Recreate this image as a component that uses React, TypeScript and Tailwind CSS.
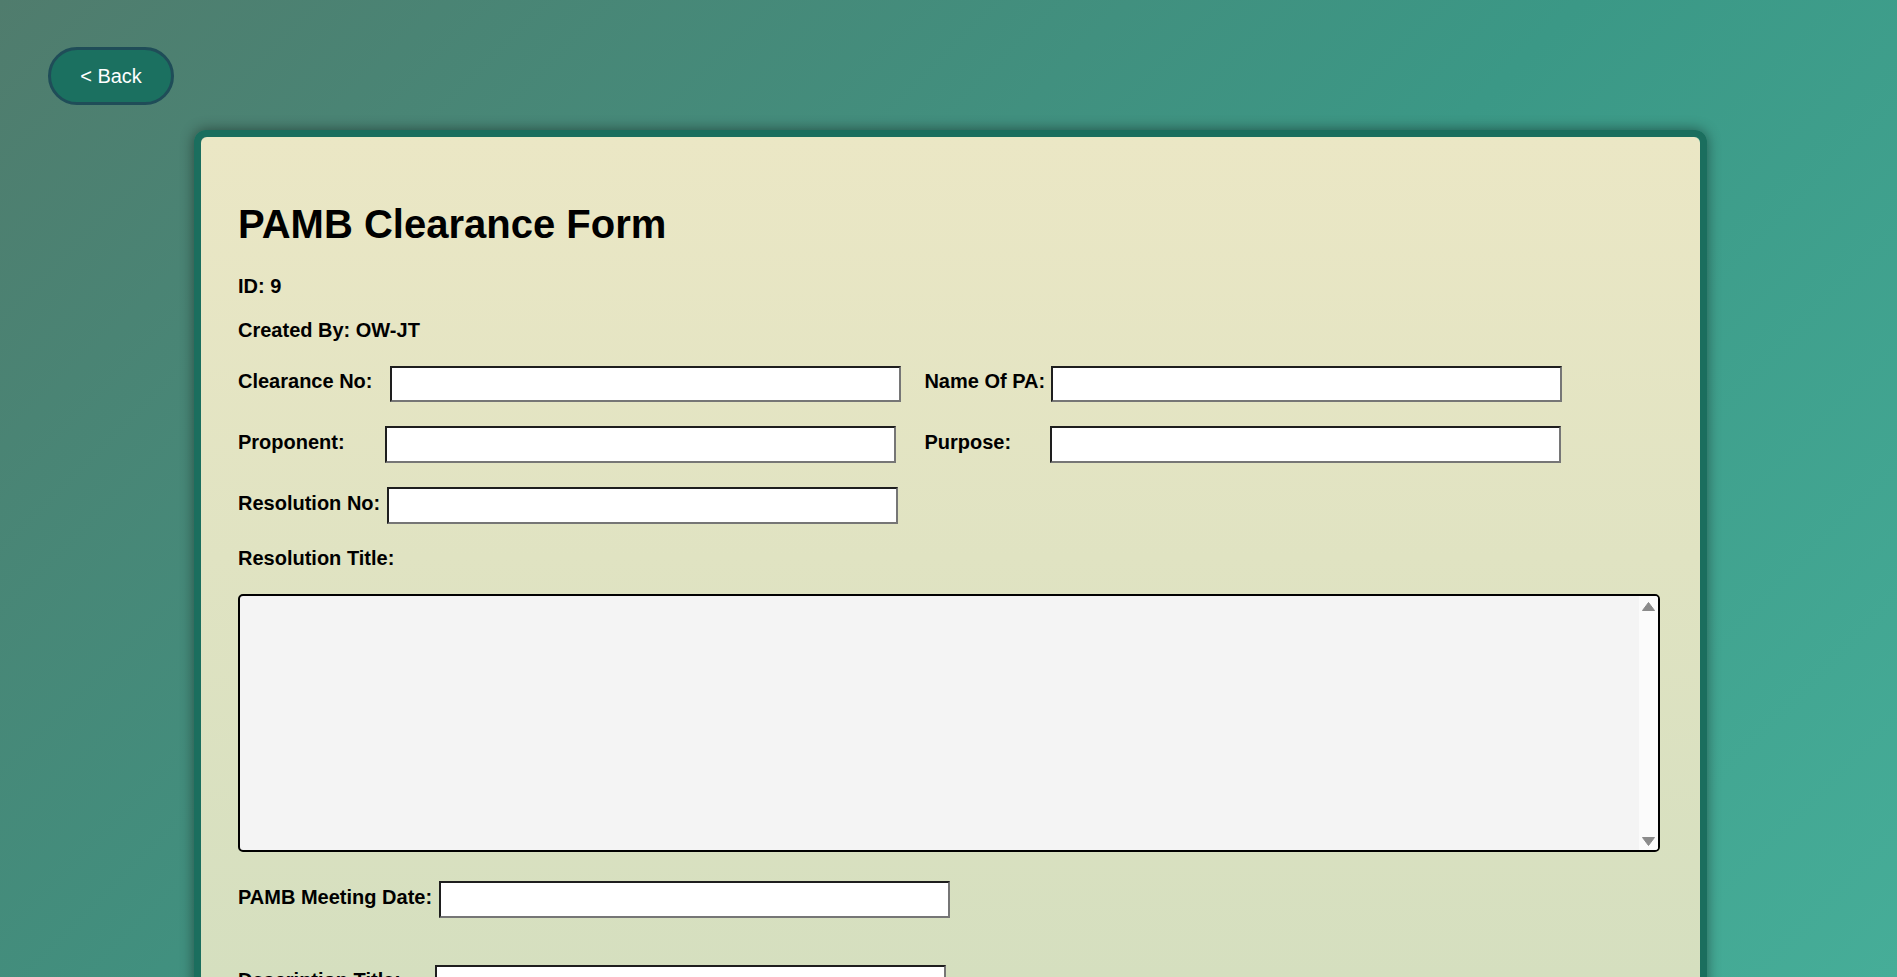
import React from 'react';

type FieldProps = {
  label: string;
  labelWidth: string;
};

function Field({ label, labelWidth }: FieldProps) {
  return (
    <div className="flex items-center">
      <label className={`${labelWidth} shrink-0 mb-[4px] text-[20px] leading-[23px] font-bold text-black`}>
        {label}
      </label>
      <input
        type="text"
        className="h-[36.5px] w-[511px] border-2 border-solid border-t-[#1e1e1e] border-l-[#1e1e1e] border-r-[#767676] border-b-[#767676] bg-white px-1 text-[18px] outline-none"
      />
    </div>
  );
}

export default function App() {
  return (
    <div className="h-screen overflow-hidden bg-[linear-gradient(135deg,#507c6d_0%,#3b9886_55%,#46ad98_100%)] font-['Liberation_Sans',Arial,sans-serif]">
      <div className="pl-[48px] pt-[47px]">
        <button className="h-[58px] w-[126px] rounded-full border-[3px] border-[#1f4d58] bg-[#1b7060] text-[20px] text-white">
          &lt; Back
        </button>
      </div>

      <div className="ml-[194px] mt-[25px] w-[1513px] rounded-[12px] border-[7px] border-[#1b6e5e] shadow-[0_0_14px_rgba(0,0,0,0.45)]">
        <div className="rounded-[6px] bg-[linear-gradient(180deg,#ebe7c5_0px,#d5dfbf_840px)] pl-[37px] pr-[41px] pt-[63.5px] pb-[60px] text-black">
          <h1 className="text-[40px] leading-[46px] font-bold">PAMB Clearance Form</h1>
          <p className="mt-[28px] text-[20px] leading-[23px] font-bold">ID: 9</p>
          <p className="mt-[21.8px] text-[20px] leading-[23px] font-bold">Created By: OW-JT</p>

          <div className="mt-[23.4px] flex flex-col gap-[24.2px]">
            <div className="flex items-center">
              <div className="w-[686.4px]">
                <Field label="Clearance No:" labelWidth="w-[151.6px]" />
              </div>
              <Field label="Name Of PA:" labelWidth="w-[126.3px]" />
            </div>
            <div className="flex items-center">
              <div className="w-[686.4px]">
                <Field label="Proponent:" labelWidth="w-[146.8px]" />
              </div>
              <Field label="Purpose:" labelWidth="w-[125.2px]" />
            </div>
            <div className="flex items-center">
              <Field label="Resolution No:" labelWidth="w-[148.7px]" />
            </div>
          </div>

          <p className="mt-[23.3px] text-[20px] leading-[23px] font-bold">Resolution Title:</p>
          <div className="mt-[23.7px] flex h-[258px] w-[1422px] overflow-hidden rounded-[5px] border-2 border-black bg-[#f4f4f4]">
            <textarea className="flex-1 resize-none bg-transparent p-[2px] text-[18px] outline-none" />
            <div className="flex w-[19px] flex-col items-center justify-between bg-[#fbfbfb] pt-[6px] pb-[4px]">
              <svg width="13" height="9" viewBox="0 0 13 9">
                <path d="M6.5 0.5 L12.5 8.5 L0.5 8.5 Z" fill="#8b8b8b" strokeLinejoin="round" stroke="#8b8b8b" strokeWidth="1" />
              </svg>
              <svg width="13" height="9" viewBox="0 0 13 9">
                <path d="M0.5 0.5 L12.5 0.5 L6.5 8.5 Z" fill="#8b8b8b" strokeLinejoin="round" stroke="#8b8b8b" strokeWidth="1" />
              </svg>
            </div>
          </div>

          <div className="mt-[29.7px]">
            <Field label="PAMB Meeting Date:" labelWidth="w-[200.7px]" />
          </div>
          <div className="mt-[47px]">
            <Field label="Description Title:" labelWidth="w-[197px]" />
          </div>
        </div>
      </div>
    </div>
  );
}
